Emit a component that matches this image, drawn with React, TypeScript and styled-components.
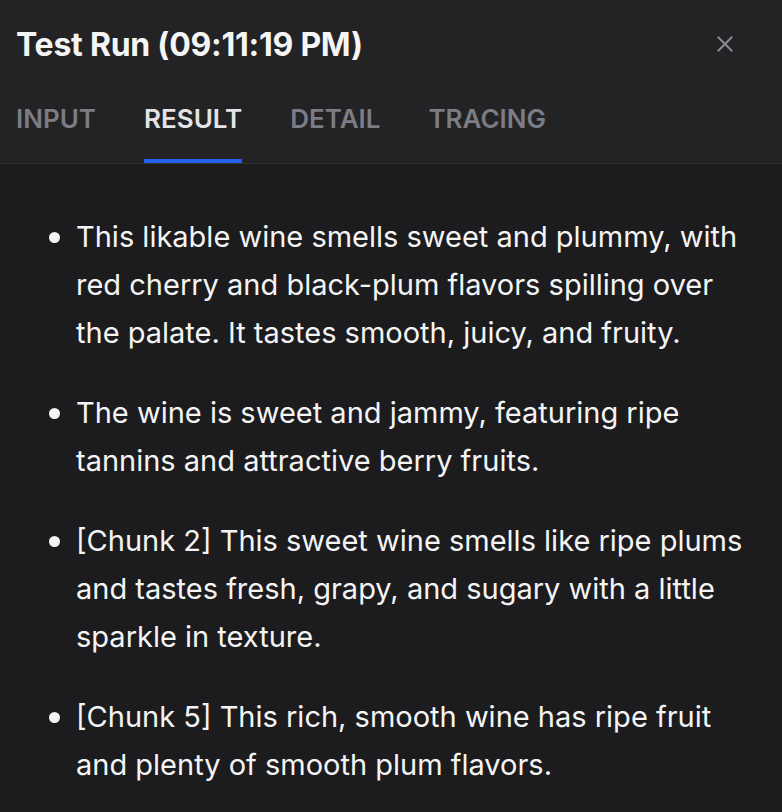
import React from "react";
import styled, { createGlobalStyle } from "styled-components";

const Global = createGlobalStyle`
  html, body { margin: 0; padding: 0; background: #1c1c1e; }
  body { font-family: Inter, "Noto Sans", sans-serif; -webkit-font-smoothing: antialiased; }
`;

const Panel = styled.div`
  width: 782px;
  height: 812px;
  background: #1c1c1e;
  display: flex;
  flex-direction: column;
  overflow: hidden;
`;

const Header = styled.div`
  background: #232325;
  border-bottom: 1px solid #2f2f32;
  display: flex;
  flex-direction: column;
`;

const TitleRow = styled.div`
  height: 88px;
  display: flex;
  align-items: center;
  justify-content: space-between;
  padding: 0 49px 0 16px;
`;

const Title = styled.h1`
  margin: 0;
  font-size: 32px;
  font-weight: 700;
  color: #f5f5f5;
  letter-spacing: -0.25px;
`;

const Close = styled.button`
  background: none;
  border: none;
  padding: 0;
  width: 16px;
  height: 16px;
  display: flex;
  align-items: center;
  justify-content: center;
  color: #8a8a90;
  cursor: pointer;
`;

const Tabs = styled.div`
  display: flex;
  gap: 48px;
  padding: 0 16px;
  height: 75px;
`;

const Tab = styled.div<{ $active?: boolean }>`
  font-size: 26px;
  font-weight: 600;
  color: ${(p) => (p.$active ? "#e4e4e6" : "#7b7c84")};
  display: flex;
  align-items: center;
  padding-bottom: 14px;
  position: relative;
  &::after {
    content: "";
    display: ${(p) => (p.$active ? "block" : "none")};
    position: absolute;
    left: 0;
    right: 0;
    bottom: 0;
    height: 4px;
    background: #1f62e8;
  }
`;

const Body = styled.div`
  padding: 49px 30px 0 49px;
`;

const List = styled.ul`
  margin: 0;
  padding: 0;
  list-style: none;
  color: #f4f4f5;
  font-size: 29px;
  line-height: 48px;
  display: flex;
  flex-direction: column;
  gap: 32px;
`;

const Item = styled.li`
  display: flex;
  align-items: flex-start;
  gap: 16px;
`;

const Dot = styled.span`
  flex: none;
  width: 11px;
  height: 11px;
  border-radius: 50%;
  background: #f4f4f5;
  margin-top: 19px;
`;

const Text = styled.span`
  flex: 1;
`;

const items = [
  "This likable wine smells sweet and plummy, with red cherry and black-plum flavors spilling over the palate. It tastes smooth, juicy, and fruity.",
  "The wine is sweet and jammy, featuring ripe tannins and attractive berry fruits.",
  "[Chunk 2] This sweet wine smells like ripe plums and tastes fresh, grapy, and sugary with a little sparkle in texture.",
  "[Chunk 5] This rich, smooth wine has ripe fruit and plenty of smooth plum flavors.",
];

export default function App() {
  return (
    <Panel>
      <Global />
      <Header>
        <TitleRow>
          <Title>Test Run (09:11:19 PM)</Title>
          <Close aria-label="Close">
            <svg width="16" height="16" viewBox="0 0 16 16" fill="none" stroke="currentColor" strokeWidth="2" strokeLinecap="square">
              <path d="M1.5 1.5L14.5 14.5M14.5 1.5L1.5 14.5" />
            </svg>
          </Close>
        </TitleRow>
        <Tabs>
          <Tab>INPUT</Tab>
          <Tab $active>RESULT</Tab>
          <Tab>DETAIL</Tab>
          <Tab>TRACING</Tab>
        </Tabs>
      </Header>
      <Body>
        <List>
          {items.map((t) => (
            <Item key={t}>
              <Dot />
              <Text>{t}</Text>
            </Item>
          ))}
        </List>
      </Body>
    </Panel>
  );
}
